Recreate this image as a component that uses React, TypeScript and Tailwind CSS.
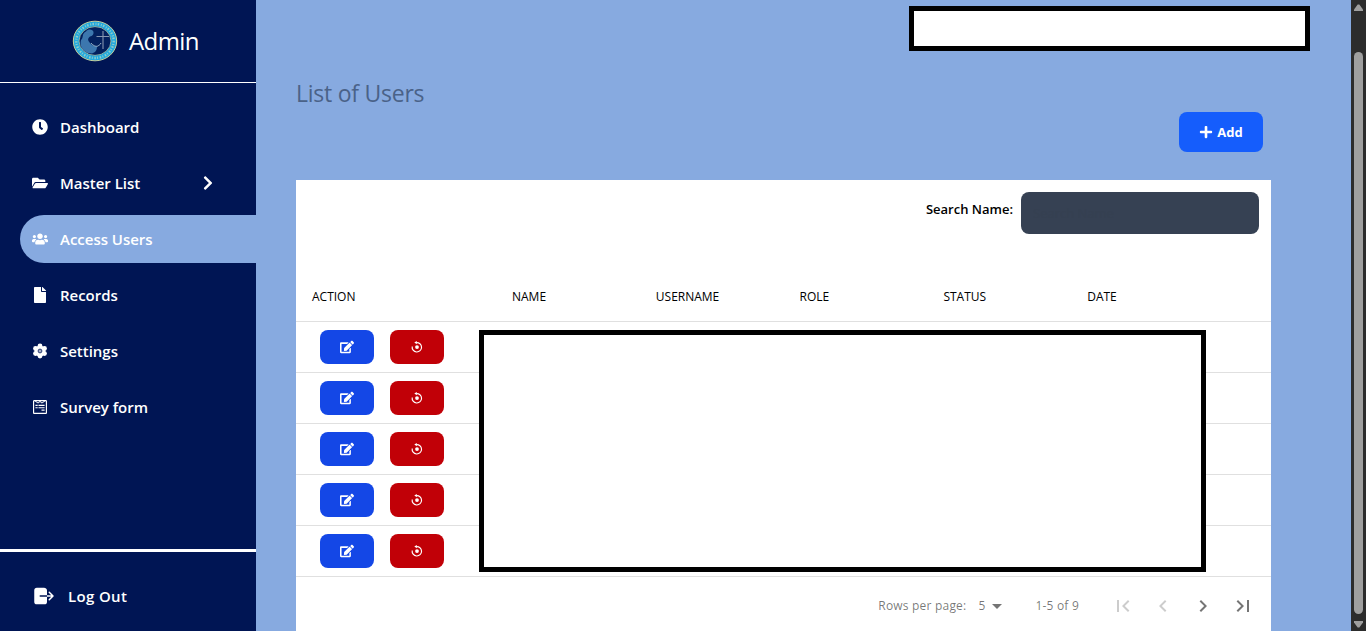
import React from "react";
import { FaUsers, FaClock, FaFolderOpen, FaFile, FaWpforms, FaChevronRight, FaEdit, FaPlus } from "react-icons/fa";
import { IoLogOut } from "react-icons/io5";
import { MdFirstPage, MdLastPage, MdChevronLeft, MdChevronRight, MdArrowDropDown } from "react-icons/md";

function GearIcon({ className }: { className?: string }) {
  return (
    <svg className={className} viewBox="0 0 16 16" fill="currentColor">
      <circle cx="8" cy="8" r="5.600" />
      <circle cx="8" cy="2.900" r="2.400" />
      <circle cx="8" cy="13.100" r="2.400" />
      <circle cx="3.500" cy="5.400" r="2.400" />
      <circle cx="12.500" cy="5.400" r="2.400" />
      <circle cx="3.500" cy="10.600" r="2.400" />
      <circle cx="12.500" cy="10.600" r="2.400" />
      <circle cx="8" cy="8" r="1.900" fill="#a5acc6" stroke="#1c2f68" strokeWidth="0.900" />
    </svg>
  );
}

function ResetIcon({ className }: { className?: string }) {
  return (
    <svg className={className} viewBox="0 0 12 12" fill="none">
      <path d="M5.300 1.600A4.700 4.700 0 1 1 1.200 5.500" stroke="currentColor" strokeWidth="1.150" />
      <path d="M5.800 0v3.200L3.300 1.600z" fill="currentColor" />
      <circle cx="6" cy="6.100" r="1.900" fill="currentColor" />
    </svg>
  );
}

const navItems = [
  { label: "Dashboard", icon: FaClock },
  { label: "Master List", icon: FaFolderOpen, expandable: true },
  { label: "Access Users", icon: FaUsers, active: true },
  { label: "Records", icon: FaFile },
  { label: "Settings", icon: GearIcon },
  { label: "Survey form", icon: FaWpforms },
];

const columns = ["Name", "Username", "Role", "Status", "Date"];

function Logo() {
  return (
    <svg className="h-[42px] w-[46px] shrink-0" viewBox="0 0 46 42">
      <ellipse cx="23" cy="21" rx="21.700" ry="19.800" fill="#22a8de" stroke="#c3cf9c" strokeWidth="1" />
      <ellipse cx="23" cy="21" rx="18.700" ry="17" fill="none" stroke="#d5e6bd" strokeWidth="2.400" strokeDasharray="1.500 1.700 0.900 1.300" opacity=".6" />
      <ellipse cx="23" cy="21" rx="16" ry="14.400" fill="#03205d" stroke="#a9cbb0" strokeWidth=".8" />
      <path d="M14 11.500c2-3 7-2.500 7.500.500.300 2.500-1 4-3.500 4.500-1.500 1-2.500 3-1.500 4.500 2 3 5 5.500 8.500 5.500 0 4-2 6-5 7l-4-.5C10 30.500 7.500 25.500 9 20c1-1 1.500-2 1.800-4 .2-2 1.200-3.500 3.200-4.500z" fill="#3c77ae" />
      <path d="M19 23c2 2.500 5 4 7 3 1-1 2-1 3-3" fill="none" stroke="#9fb9cc" strokeWidth="1" />
      <path d="M31 11v18M24.500 16.500h12.500" stroke="#8595b0" strokeWidth="1.100" />
    </svg>
  );
}

function Sidebar() {
  return (
    <aside className="flex w-64 shrink-0 flex-col bg-[#001554] text-white">
      <div className="flex h-[83px] items-center gap-[11px] border-b border-white pl-[72px]">
        <Logo />
        <span className="text-[24px] leading-8 tracking-[-0.6px]">Admin</span>
      </div>
      <nav className="flex flex-col gap-2 pt-5 pl-5">
        {navItems.map(({ label, icon: Icon, active, expandable }) => (
          <a
            key={label}
            className={`flex h-12 items-center rounded-l-full pl-3 text-[15px] font-semibold tracking-[-0.02px] ${active ? "bg-[#87aae0]" : ""}`}
          >
            <span className="flex w-4 justify-center">
              <Icon className="size-4" />
            </span>
            <span className="ml-3 w-[143px] whitespace-nowrap">{label}</span>
            {expandable && <FaChevronRight className="-ml-[3px] size-4" />}
          </a>
        ))}
      </nav>
      <div className="mt-auto flex h-[82px] items-center border-t-3 border-white pt-[9px] pl-8">
        <IoLogOut className="size-6" />
        <span className="ml-3 text-[15px] font-semibold tracking-[0.35px]">Log Out</span>
      </div>
    </aside>
  );
}

function UserTable() {
  return (
    <section className="flex h-[451px] w-[975px] flex-col overflow-hidden bg-white">
      <div className="flex h-[92px] shrink-0 items-start justify-end pt-3 pr-3">
        <label className="mt-[7px] mr-2 text-[13px] leading-5 font-semibold text-black">Search Name:</label>
        <input
          placeholder="Search Name"
          className="h-[42px] w-[238px] rounded-lg bg-[#364153] px-3 text-[13px] placeholder:text-[#354051]"
        />
      </div>
      <div className="relative shrink-0">
        <div className="flex h-[50px] items-center border-b border-[#e0e0e0] pl-4 text-[12px] font-medium text-black uppercase">
          <div className="w-[200px]">Action</div>
          {columns.map((column) => (
            <div key={column} className="w-[143.800px]">{column}</div>
          ))}
        </div>
        {[0, 1, 2, 3, 4].map((row) => (
          <div key={row} className="flex h-[51px] items-center gap-4 border-b border-[#e0e0e0] pl-6 text-white">
            <button className="flex h-[34px] w-[54px] items-center justify-center rounded-lg bg-[#1447e6]">
              <FaEdit className="size-[14px]" />
            </button>
            <button className="flex h-[34px] w-[54px] items-center justify-center rounded-lg bg-[#c10007]">
              <ResetIcon className="size-3" />
            </button>
          </div>
        ))}
        <div className="absolute top-[58px] left-[183px] h-[242px] w-[727px] border-5 border-black bg-white" />
      </div>
      <footer className="flex h-[57px] shrink-0 items-center justify-end text-[12px] tracking-[0.2px] text-black/54">
        <span>Rows per page:</span>
        <span className="ml-3">5</span>
        <MdArrowDropDown className="size-6" />
        <span className="mr-[24px] ml-[26px]">1-5 of 9</span>
        <div className="flex w-[168px] gap-4 pl-2">
          <MdFirstPage className="size-6 text-black/20" />
          <MdChevronLeft className="size-6 text-black/20" />
          <MdChevronRight className="size-6" />
          <MdLastPage className="size-6" />
        </div>
      </footer>
    </section>
  );
}

function ScrollBar() {
  return (
    <div className="flex w-[15px] shrink-0 flex-col items-center bg-[#2c2c2c] text-[#9f9f9f]">
      <svg className="mt-1 h-[7px] w-[9px]" viewBox="0 0 9 7">
        <path d="M3.700.5h1.600L9 5.500V7H0V5.500z" fill="currentColor" />
      </svg>
      <div className="mt-[41px] h-[562px] w-[9px] rounded-full bg-[#9f9f9f]" />
      <svg className="mt-[7px] h-[7px] w-[9px]" viewBox="0 0 9 7">
        <path d="M3.700 6.500h1.600L9 1.500V0H0v1.500z" fill="currentColor" />
      </svg>
    </div>
  );
}

export default function App() {
  return (
    <div className="flex h-[631px] w-[1366px] overflow-hidden bg-[#87aae0] font-['Open_Sans',sans-serif]">
      <Sidebar />
      <main className="flex flex-1 flex-col pl-10">
        <div className="flex h-[51px] justify-end pt-[6px] pr-[41px]">
          <div className="h-[45px] w-[401px] border-5 border-black bg-white" />
        </div>
        <h1 className="mt-[26px] text-[23px] leading-8 tracking-[-0.25px] text-[#4a6288]">List of Users</h1>
        <div className="mt-[3px] mb-7 flex justify-end pr-[88px]">
          <button className="flex h-10 w-[84px] items-center justify-center gap-1 rounded-lg bg-[#155dfc] text-[13px] font-bold text-white">
            <FaPlus className="size-[14px]" />
            <span className="pt-px">Add</span>
          </button>
        </div>
        <UserTable />
      </main>
      <ScrollBar />
    </div>
  );
}
